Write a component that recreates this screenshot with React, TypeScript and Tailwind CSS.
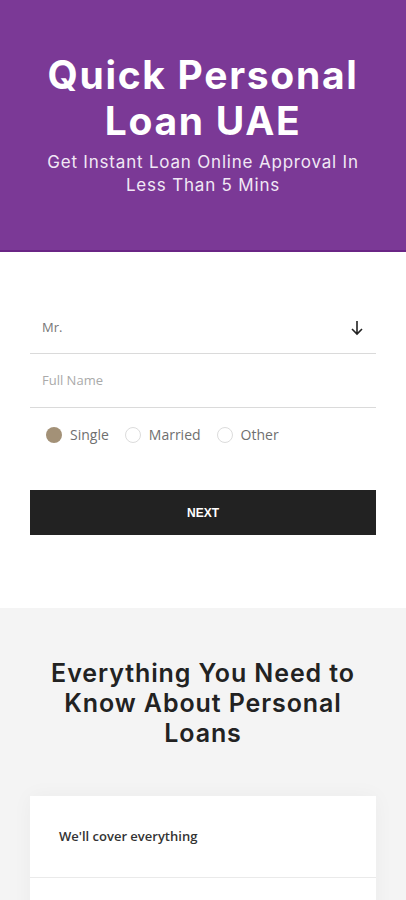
import React, { useState } from "react";

const heading = { fontFamily: "Inter, 'Open Sans', sans-serif" };
const body = { fontFamily: "'Open Sans', 'Noto Sans', sans-serif" };

function Radio({
  label,
  checked,
  onSelect,
}: {
  label: string;
  checked: boolean;
  onSelect: () => void;
}) {
  return (
    <button type="button" onClick={onSelect} className="flex items-center gap-2">
      <span
        className={
          checked
            ? "size-4 rounded-full bg-[#a39177]"
            : "size-4 rounded-full border border-[#dcdcdc] bg-white"
        }
      />
      <span className="text-sm text-[#6f6f6f]">{label}</span>
    </button>
  );
}

export default function App() {
  const [status, setStatus] = useState("Single");

  return (
    <div className="min-h-[900px] w-full bg-white" style={body}>
      <header className="flex h-[252px] flex-col items-center border-b-2 border-[#6a2585] bg-[#7b3996] px-2 pt-[52px] text-center text-white">
        <h1 className="text-[39px] font-bold leading-[46px] tracking-[1.7px]" style={heading}>
          Quick Personal
          <br />
          Loan UAE
        </h1>
        <p className="mt-[7px] text-[17px] leading-[23px] tracking-[0.8px] text-[#f1e8f5]" style={heading}>
          Get Instant Loan Online Approval In
          <br />
          Less Than 5 Mins
        </p>
      </header>

      <form className="flex flex-col px-[30px] pt-[50px] pb-[73px]">
        <div className="flex h-[52px] items-center justify-between border-b border-[#dadada] pl-[12px] pr-[12px]">
          <span className="text-[13px] text-[#777]">Mr.</span>
          <svg width="14" height="16" viewBox="0 0 14 16" fill="none" stroke="#222" strokeWidth="1.6">
            <path d="M7 1v13M2 9l5 5 5-5" />
          </svg>
        </div>
        <div className="flex h-[54px] items-center border-b border-[#dadada] pl-[12px]">
          <span className="text-[13px] text-[#aaa]">Full Name</span>
        </div>
        <div className="flex h-[54px] items-center gap-[16px] pl-[16px]">
          {["Single", "Married", "Other"].map((s) => (
            <Radio key={s} label={s} checked={status === s} onSelect={() => setStatus(s)} />
          ))}
        </div>
        <button
          type="button"
          className="mt-[28px] h-[45px] w-full bg-[#222] text-[12px] font-semibold text-white"
          style={{ fontFamily: "'Liberation Sans', Arial, sans-serif" }}
        >
          NEXT
        </button>
      </form>

      <section className="bg-[#f4f4f4] px-[24px] pt-[50px]">
        <h2
          className="text-center text-[25px] font-semibold leading-[30px] tracking-[0.9px] text-[#222]"
          style={heading}
        >
          Everything You Need to
          <br />
          Know About Personal
          <br />
          Loans
        </h2>
        <div className="mx-[6px] mt-[48px] flex flex-col shadow-[0_0_20px_rgba(0,0,0,0.04)]">
          <div className="flex h-[82px] items-center border-b border-[#eaeaea] bg-white px-[29px]">
            <span className="text-[13px] font-semibold text-[#333]">We'll cover everything</span>
          </div>
          <div className="h-[60px] bg-white" />
        </div>
      </section>
    </div>
  );
}
